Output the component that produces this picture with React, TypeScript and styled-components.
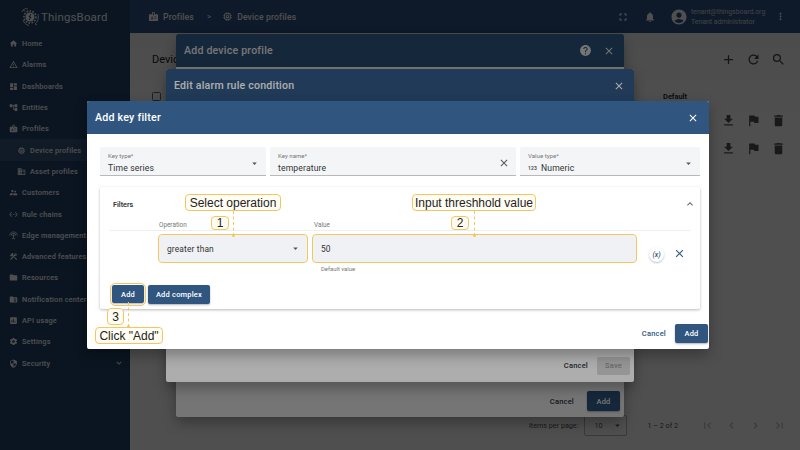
import { ReactNode } from "react";
import styled, { createGlobalStyle } from "styled-components";
import {
  MdAccountCircle,
  MdAdd,
  MdArrowDropDown,
  MdBadge,
  MdChevronLeft,
  MdChevronRight,
  MdClose,
  MdConstruction,
  MdDashboard,
  MdDelete,
  MdDomain,
  MdExpandLess,
  MdExpandMore,
  MdFileDownload,
  MdFirstPage,
  MdFlag,
  MdFolder,
  MdFullscreen,
  MdHelp,
  MdHome,
  MdInsertChart,
  MdLastPage,
  MdMemory,
  MdMoreVert,
  MdNotifications,
  MdOutlineWarningAmber,
  MdRefresh,
  MdSearch,
  MdSecurity,
  MdSettings,
  MdSettingsEthernet,
  MdSettingsInputAntenna,
  MdSnippetFolder,
  MdSupervisorAccount,
  MdAccountTree,
} from "react-icons/md";

const GlobalStyle = createGlobalStyle`
  html, body {
    margin: 0;
    width: 800px;
    height: 450px;
    overflow: hidden;
    font-family: Roboto, "Liberation Sans", sans-serif;
  }
  * { box-sizing: border-box; }
`;

const Page = styled.div`
  position: relative;
  width: 800px;
  height: 450px;
  display: grid;
  grid-template-columns: 130px 1fr;
  overflow: hidden;
  background: #fafafa;
`;

const Sidebar = styled.aside`
  background: #26466f;
  color: #fff;
  display: flex;
  flex-direction: column;
`;

const Logo = styled.div`
  height: 33px;
  display: flex;
  align-items: center;
  gap: 1px;
  padding-left: 20px;
  font-size: 11.4px;
  letter-spacing: 0.2px;
  color: #fff;
`;

const Nav = styled.nav`
  display: flex;
  flex-direction: column;
`;

const NavRow = styled.div<{ $child?: boolean; $active?: boolean }>`
  height: 21.3px;
  display: flex;
  align-items: center;
  gap: 4px;
  padding-left: ${(p) => (p.$child ? 17 : 9)}px;
  font-size: 7.3px;
  font-weight: 500;
  letter-spacing: 0.2px;
  white-space: nowrap;
  overflow: hidden;
  background: ${(p) => (p.$active ? "#39577f" : "transparent")};
  svg { flex: none; }
`;

const NavChevron = styled.span`
  margin-left: auto;
  margin-right: 6px;
  display: flex;
`;

const Main = styled.main`
  display: flex;
  flex-direction: column;
  min-width: 0;
`;

const Toolbar = styled.header`
  height: 33px;
  background: #2e5585;
  color: #fff;
  display: flex;
  align-items: center;
  padding: 0 14px 0 18px;
`;

const Crumb = styled.span`
  display: flex;
  align-items: center;
  gap: 4px;
  font-size: 8.6px;
  font-weight: 500;
  letter-spacing: 0.15px;
`;

const CrumbSep = styled.span`
  font-size: 8px;
  margin: 0 11px 0 13px;
`;

const ToolbarRight = styled.div`
  margin-left: auto;
  display: flex;
  align-items: center;
`;

const ToolIcon = styled.span<{ $gap?: number }>`
  display: flex;
  margin-right: ${(p) => p.$gap ?? 0}px;
`;

const UserText = styled.div`
  width: 84px;
  margin-left: 3px;
  display: flex;
  flex-direction: column;
  gap: 2px;
  font-size: 6.9px;
  line-height: 8px;
  opacity: 0.75;
  white-space: nowrap;
`;

const Content = styled.div`
  flex: 1;
  display: flex;
  flex-direction: column;
  padding: 16px 14px 0 22px;
  color: #222;
  background: linear-gradient(#f6f6f6, #fff 20%);
`;

const TableBar = styled.div`
  height: 20px;
  display: flex;
  align-items: center;
  font-size: 11px;
`;

const TableBarIcons = styled.div`
  margin-left: auto;
  display: flex;
  gap: 10px;
  color: #444;
`;

const TableHead = styled.div`
  margin-top: 17px;
  height: 20px;
  display: flex;
  align-items: center;
  justify-content: space-between;
  padding-right: 99px;
  font-size: 7.4px;
  font-weight: 600;
`;

const Check = styled.span`
  width: 9px;
  height: 9px;
  border: 1.4px solid #666;
  border-radius: 1.5px;
`;

const TableRow = styled.div`
  height: 28px;
  display: flex;
  justify-content: flex-end;
  align-items: center;
  gap: 10px;
  color: #555;
`;

const Pager = styled.div`
  margin-top: auto;
  height: 46px;
  padding-bottom: 3px;
  display: flex;
  align-items: center;
  font-size: 7.2px;
  color: #555;
`;

const PagerSelect = styled.span`
  width: 43px;
  height: 21px;
  margin: 0 20px 0 6px;
  padding: 0 3px 0 9px;
  border: 1px solid #bbb;
  border-radius: 2px;
  display: flex;
  align-items: center;
  justify-content: space-between;
`;

const PagerNav = styled.div`
  margin-left: 23px;
  display: flex;
  gap: 11px;
  color: #bbb;
`;

const PagerStart = styled.div`
  margin-left: auto;
`;

const Backdrop = styled.div`
  position: absolute;
  inset: 0;
  background: rgba(0, 0, 0, 0.32);
`;

const Dialog = styled.section<{ $l: number; $t: number; $w: number; $h: number }>`
  position: absolute;
  left: ${(p) => p.$l}px;
  top: ${(p) => p.$t}px;
  width: ${(p) => p.$w}px;
  height: ${(p) => p.$h}px;
  background: #fff;
  border-radius: 2px;
  overflow: hidden;
  display: flex;
  flex-direction: column;
  box-shadow: 0 6px 14px rgba(0, 0, 0, 0.3);
`;

const DialogTitle = styled.div<{ $size?: number }>`
  height: 33px;
  flex: none;
  background: #305680;
  color: #fff;
  display: flex;
  align-items: center;
  gap: 11px;
  padding: 0 ${(p) => (p.$size === 10.6 ? 9 : 10)}px 0 8px;
  font-size: ${(p) => p.$size ?? 10.7}px;
  font-weight: 500;
  letter-spacing: 0.2px;
`;

const TitleText = styled.span`
  margin-right: auto;
`;

const DialogBody = styled.div`
  flex: 1;
  min-height: 0;
`;

const DialogFooter = styled.div<{ $gap: number; $pad: number }>`
  flex: none;
  height: 32px;
  display: flex;
  align-items: center;
  justify-content: flex-end;
  gap: ${(p) => p.$gap}px;
  padding-right: ${(p) => p.$pad}px;
`;

const TextBtn = styled.span`
  font-size: 7.5px;
  font-weight: 500;
  letter-spacing: 0.2px;
  color: #305680;
`;

const DarkTextBtn = styled(TextBtn)`
  color: #33373c;
`;

const SolidBtn = styled.span<{ $w: number; $h: number; $off?: boolean }>`
  width: ${(p) => p.$w}px;
  height: ${(p) => p.$h}px;
  border-radius: 2px;
  display: flex;
  align-items: center;
  justify-content: center;
  font-size: 7.5px;
  font-weight: 500;
  letter-spacing: 0.2px;
  background: ${(p) => (p.$off ? "#dcdcdc" : "#305680")};
  color: ${(p) => (p.$off ? "#9a9a9a" : "#fff")};
  box-shadow: ${(p) => (p.$off ? "none" : "0 1px 2px rgba(0,0,0,.3)")};
`;

const KeyForm = styled.div`
  padding: 13px 9px 0 13px;
  display: grid;
  grid-template-columns: 166px 246px 180px;
  column-gap: 4px;
`;

const Field = styled.div`
  height: 29px;
  background: #f4f5f7;
  border-bottom: 1px solid #b9b9b9;
  border-radius: 2px 2px 0 0;
  padding: 4px 6px 0 8px;
  display: grid;
  grid-template-columns: 1fr auto;
  align-items: center;
  color: #333;
`;

const FieldLabel = styled.div`
  grid-column: 1;
  font-size: 6.1px;
  line-height: 8px;
  color: #777;
`;

const FieldValue = styled.div`
  grid-column: 1;
  display: flex;
  align-items: center;
  gap: 5px;
  font-size: 8.6px;
  line-height: 12px;
  letter-spacing: 0.15px;
`;

const FieldIcon = styled.span`
  grid-column: 2;
  grid-row: 1 / 3;
  display: flex;
  color: #555;
`;

const NumIcon = styled.span`
  font-size: 5px;
  font-weight: 700;
  width: 8px;
  color: #555;
`;

const FilterPanel = styled.div`
  margin: 11px 9px 0 13px;
  height: 122px;
  border-radius: 2px;
  box-shadow: 0 1px 3px rgba(0, 0, 0, 0.28);
  padding: 0 10px 0 10px;
  display: flex;
  flex-direction: column;
`;

const PanelHead = styled.div`
  height: 34px;
  padding: 0 0 0 3px;
  display: flex;
  align-items: center;
  justify-content: space-between;
  font-size: 7.2px;
  font-weight: 600;
  color: #333;
  svg { color: #666; margin-right: -6px; }
`;

const ColumnHead = styled.div`
  height: 10px;
  display: grid;
  grid-template-columns: 155px 1fr;
  padding-left: 49px;
  border-bottom: 1px solid #eee;
  font-size: 6.4px;
  line-height: 9px;
  color: #777;
`;

const FilterRow = styled.div`
  margin-top: 4px;
  height: 27px;
  display: flex;
  padding-left: 49px;
  align-items: stretch;
`;

const RowInput = styled.div<{ $w: number }>`
  width: ${(p) => p.$w}px;
  margin-right: 6px;
  background: #f0f1f5;
  border-radius: 3px;
  outline: 1.5px solid #f3c75f;
  padding: 0 6px 0 8px;
  display: flex;
  align-items: center;
  justify-content: space-between;
  font-size: 8.4px;
  letter-spacing: 0.15px;
  color: #333;
  svg { color: #555; }
`;

const VarButton = styled.span`
  width: 15px;
  height: 15px;
  margin: 12px 9px 0 7px;
  border-radius: 50%;
  box-shadow: 0 1px 2px rgba(0, 0, 0, 0.25);
  display: flex;
  align-items: center;
  justify-content: center;
  font-size: 7px;
  font-style: italic;
  font-weight: 500;
  color: #305680;
`;

const RemoveIcon = styled.span`
  display: flex;
  margin-top: 12px;
  color: #305680;
`;

const HelpText = styled.div`
  margin-top: 3px;
  height: 9px;
  padding-left: 211px;
  font-size: 5.9px;
  line-height: 9px;
  color: #777;
`;

const PanelActions = styled.div`
  margin-top: 11px;
  display: flex;
  gap: 4px;
  padding-left: 2px;
`;

const Outlined = styled.span`
  display: flex;
  border-radius: 3px;
  outline: 1.5px solid #f3c75f;
  outline-offset: 1px;
`;

const Callout = styled.div<{ $l: number; $t: number; $w: number; $h: number; $size?: number }>`
  position: absolute;
  left: ${(p) => p.$l}px;
  top: ${(p) => p.$t}px;
  width: ${(p) => p.$w}px;
  height: ${(p) => p.$h}px;
  background: #fffdf3;
  border: 1.5px solid #f3c75f;
  border-radius: 4px;
  display: flex;
  align-items: center;
  justify-content: center;
  font-family: "Liberation Sans", Arial, sans-serif;
  font-size: ${(p) => p.$size ?? 12}px;
  color: #222;
  white-space: nowrap;
`;

const Leader = styled.div<{ $l: number; $t: number; $h: number }>`
  position: absolute;
  left: ${(p) => p.$l}px;
  top: ${(p) => p.$t}px;
  height: ${(p) => p.$h}px;
  border-left: 1px dashed #f3c75f;
  &::after {
    content: "";
    position: absolute;
    left: -2px;
    bottom: -1px;
    width: 3px;
    height: 3px;
    border-radius: 50%;
    background: #f3c75f;
  }
`;

function ThingsLogo() {
  return (
    <svg width="20" height="20" viewBox="0 0 20 20" fill="none" stroke="#fff" strokeWidth="0.8">
      <circle cx="10" cy="10" r="4.5" fill="#fff" stroke="none" />
      <circle cx="10" cy="10" r="6" strokeWidth="1.6" strokeDasharray="1.6 1.4" />
      <path d="M2 5 C3 2 6 1 8 2 M5 4 L3 3 M18 7 C19 11 18 15 15 17 M15 17 L17 18 M3 13 C4 16 6 18 9 18.5 M11 7 L9 10 L11 10 L9 13" />
      <path d="M11 7 L9 10 L11 10 L9 13" stroke="#26466f" strokeWidth="1" />
    </svg>
  );
}

const navItems: { label: string; icon: ReactNode; child?: boolean; active?: boolean; more?: boolean }[] = [
  { label: "Home", icon: <MdHome size={9} /> },
  { label: "Alarms", icon: <MdOutlineWarningAmber size={9} /> },
  { label: "Dashboards", icon: <MdDashboard size={9} /> },
  { label: "Entities", icon: <MdAccountTree size={9} /> },
  { label: "Profiles", icon: <MdBadge size={9} /> },
  { label: "Device profiles", icon: <MdMemory size={9} />, child: true, active: true },
  { label: "Asset profiles", icon: <MdDomain size={9} />, child: true },
  { label: "Customers", icon: <MdSupervisorAccount size={9} /> },
  { label: "Rule chains", icon: <MdSettingsEthernet size={9} /> },
  { label: "Edge management", icon: <MdSettingsInputAntenna size={9} /> },
  { label: "Advanced features", icon: <MdConstruction size={9} /> },
  { label: "Resources", icon: <MdFolder size={9} /> },
  { label: "Notification center", icon: <MdSnippetFolder size={9} /> },
  { label: "API usage", icon: <MdInsertChart size={9} /> },
  { label: "Settings", icon: <MdSettings size={9} /> },
  { label: "Security", icon: <MdSecurity size={9} />, more: true },
];

export default function App() {
  return (
    <Page>
      <GlobalStyle />
      <Sidebar>
        <Logo>
          <ThingsLogo />
          ThingsBoard
        </Logo>
        <Nav>
          {navItems.map((item) => (
            <NavRow key={item.label} $child={item.child} $active={item.active}>
              {item.icon}
              {item.label}
              {item.more && (
                <NavChevron>
                  <MdExpandMore size={10} />
                </NavChevron>
              )}
            </NavRow>
          ))}
        </Nav>
      </Sidebar>
      <Main>
        <Toolbar>
          <Crumb>
            <MdBadge size={11} />
            Profiles
          </Crumb>
          <CrumbSep>&gt;</CrumbSep>
          <Crumb>
            <MdMemory size={11} />
            Device profiles
          </Crumb>
          <ToolbarRight>
            <ToolIcon $gap={15}>
              <MdFullscreen size={12} />
            </ToolIcon>
            <ToolIcon $gap={14}>
              <MdNotifications size={12} />
            </ToolIcon>
            <ToolIcon>
              <MdAccountCircle size={18} />
            </ToolIcon>
            <UserText>
              <span>tenant@thingsboard.org</span>
              <span>Tenant administrator</span>
            </UserText>
            <ToolIcon>
              <MdMoreVert size={11} />
            </ToolIcon>
          </ToolbarRight>
        </Toolbar>
        <Content>
          <TableBar>
            Device profiles
            <TableBarIcons>
              <MdAdd size={15} />
              <MdRefresh size={15} />
              <MdSearch size={15} />
            </TableBarIcons>
          </TableBar>
          <TableHead>
            <Check />
            Default
          </TableHead>
          <TableRow>
            <MdFileDownload size={15} />
            <MdFlag size={15} />
            <MdDelete size={15} />
          </TableRow>
          <TableRow>
            <MdFileDownload size={15} />
            <MdFlag size={15} />
            <MdDelete size={15} />
          </TableRow>
          <Pager>
            <PagerStart />
            Items per page:
            <PagerSelect>
              10
              <MdArrowDropDown size={11} />
            </PagerSelect>
            1 – 2 of 2
            <PagerNav>
              <MdFirstPage size={13} />
              <MdChevronLeft size={13} />
              <MdChevronRight size={13} />
              <MdLastPage size={13} />
            </PagerNav>
          </Pager>
        </Content>
      </Main>

      <Backdrop />
      <Dialog $l={176} $t={34} $w={448} $h={383}>
        <DialogTitle $size={10.6}>
          <TitleText>Add device profile</TitleText>
          <MdHelp size={13} />
          <MdClose size={12} />
        </DialogTitle>
        <DialogBody />
        <DialogFooter $gap={13} $pad={4}>
          <DarkTextBtn>Cancel</DarkTextBtn>
          <SolidBtn $w={33} $h={20}>Add</SolidBtn>
        </DialogFooter>
      </Dialog>

      <Backdrop />
      <Dialog $l={166} $t={69} $w={468} $h={312.5}>
        <DialogTitle $size={10.6}>
          <TitleText>Edit alarm rule condition</TitleText>
          <MdClose size={12} />
        </DialogTitle>
        <DialogBody />
        <DialogFooter $gap={9} $pad={4}>
          <DarkTextBtn>Cancel</DarkTextBtn>
          <SolidBtn $w={33} $h={18} $off>Save</SolidBtn>
        </DialogFooter>
      </Dialog>

      <Backdrop />
      <Dialog $l={87} $t={101} $w={622} $h={248}>
        <DialogTitle>
          <TitleText>Add key filter</TitleText>
          <MdClose size={12} />
        </DialogTitle>
        <DialogBody>
          <KeyForm>
            <Field>
              <FieldLabel>Key type*</FieldLabel>
              <FieldValue>Time series</FieldValue>
              <FieldIcon>
                <MdArrowDropDown size={11} />
              </FieldIcon>
            </Field>
            <Field>
              <FieldLabel>Key name*</FieldLabel>
              <FieldValue>temperature</FieldValue>
              <FieldIcon>
                <MdClose size={12} />
              </FieldIcon>
            </Field>
            <Field>
              <FieldLabel>Value type*</FieldLabel>
              <FieldValue>
                <NumIcon>123</NumIcon>
                Numeric
              </FieldValue>
              <FieldIcon>
                <MdArrowDropDown size={11} />
              </FieldIcon>
            </Field>
          </KeyForm>
          <FilterPanel>
            <PanelHead>
              Filters
              <MdExpandLess size={12} />
            </PanelHead>
            <ColumnHead>
              <span>Operation</span>
              <span>Value</span>
            </ColumnHead>
            <FilterRow>
              <RowInput $w={148}>
                greater than
                <MdArrowDropDown size={11} />
              </RowInput>
              <RowInput $w={323}>50</RowInput>
              <VarButton>(x)</VarButton>
              <RemoveIcon>
                <MdClose size={13} />
              </RemoveIcon>
            </FilterRow>
            <HelpText>Default value</HelpText>
            <PanelActions>
              <Outlined>
                <SolidBtn $w={32} $h={18}>Add</SolidBtn>
              </Outlined>
              <SolidBtn $w={62} $h={19}>Add complex</SolidBtn>
            </PanelActions>
          </FilterPanel>
        </DialogBody>
        <DialogFooter $gap={9} $pad={1}>
          <TextBtn>Cancel</TextBtn>
          <SolidBtn $w={33} $h={19}>Add</SolidBtn>
        </DialogFooter>
      </Dialog>

      <Leader $l={233} $t={211} $h={25} />
      <Callout $l={185} $t={194} $w={96} $h={17}>Select operation</Callout>
      <Callout $l={211} $t={216} $w={18} $h={14}>1</Callout>
      <Leader $l={474} $t={211} $h={25} />
      <Callout $l={412} $t={194} $w={124} $h={17}>Input threshhold value</Callout>
      <Callout $l={451} $t={216} $w={18} $h={14}>2</Callout>
      <Leader $l={128} $t={302} $h={25} />
      <Callout $l={107} $t={308} $w={17} $h={17}>3</Callout>
      <Callout $l={95} $t={327} $w={68} $h={17}>Click "Add"</Callout>
    </Page>
  );
}
